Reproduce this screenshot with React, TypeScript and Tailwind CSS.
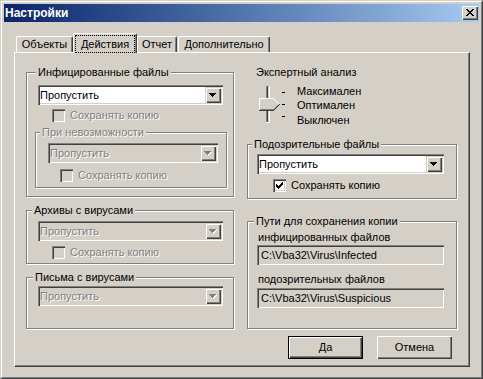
import type { ReactNode } from "react";

const sunken =
  "shadow-[inset_1px_1px_0_#808080,inset_2px_2px_0_#404040,inset_-1px_-1px_0_#fff,inset_-2px_-2px_0_#d4d0c8]";
const raised =
  "shadow-[inset_1px_1px_0_#d4d0c8,inset_2px_2px_0_#fff,inset_-1px_-1px_0_#404040,inset_-2px_-2px_0_#808080]";
const bevel = "shadow-[inset_1px_1px_0_#fff,inset_-1px_-1px_0_#404040,inset_-2px_-2px_0_#808080]";
const grayText = "text-[#808080] [text-shadow:1px_1px_0_#fff]";

function CloseGlyph() {
  const rows = [0, 1, 2, 3, 4, 5, 6];
  return (
    <svg width="8" height="7" viewBox="0 0 8 7" shapeRendering="crispEdges">
      {rows.map((i) => (
        <g key={i} fill="#000">
          <rect x={i} y={i} width="2" height="1" />
          <rect x={6 - i} y={i} width="2" height="1" />
        </g>
      ))}
    </svg>
  );
}

function Arrow({ disabled }: { disabled?: boolean }) {
  const tri = (c: string, d: number) => (
    <g fill={c}>
      <rect x={0 + d} y={0 + d} width="7" height="1" />
      <rect x={1 + d} y={1 + d} width="5" height="1" />
      <rect x={2 + d} y={2 + d} width="3" height="1" />
      <rect x={3 + d} y={3 + d} width="1" height="1" />
    </g>
  );
  return (
    <svg width="8" height="5" viewBox="0 0 8 5" shapeRendering="crispEdges">
      {disabled && tri("#fff", 1)}
      {tri(disabled ? "#808080" : "#000", 0)}
    </svg>
  );
}

function CheckMark() {
  const cols = [2, 3, 4, 3, 2, 1, 0];
  return (
    <svg width="7" height="7" viewBox="0 0 7 7" shapeRendering="crispEdges">
      {cols.map((y, x) => (
        <rect key={x} x={x} y={y} width="1" height="3" fill="#000" />
      ))}
    </svg>
  );
}

function Group({
  label,
  labelPos,
  dim,
  className,
  children,
}: {
  label: string;
  labelPos: string;
  dim?: boolean;
  className: string;
  children: ReactNode;
}) {
  return (
    <div className={`relative border border-[#808080] shadow-[inset_1px_1px_0_#fff,1px_1px_0_#fff] ${className}`}>
      <span
        className={`absolute -top-[7px] ${labelPos} whitespace-nowrap bg-[#d4d0c8] px-[2px] leading-[13px] ${dim ? grayText : ""}`}
      >
        {label}
      </span>
      {children}
    </div>
  );
}

function Combo({ className, disabled }: { className: string; disabled?: boolean }) {
  return (
    <div className={`flex h-[20px] p-[2px] ${sunken} ${disabled ? "bg-[#d4d0c8]" : "bg-white"} ${className}`}>
      <span className={`flex flex-1 items-center leading-[13px] ${disabled ? grayText : ""}`}>Пропустить</span>
      <span className={`flex w-[16px] items-center justify-center bg-[#d4d0c8] ${raised}`}>
        <Arrow disabled={disabled} />
      </span>
    </div>
  );
}

function Check({
  checked,
  disabled,
  className,
}: {
  checked?: boolean;
  disabled?: boolean;
  className: string;
}) {
  return (
    <div className={`flex items-center gap-[5px] ${className}`}>
      <span className={`flex h-[13px] w-[13px] p-[3px] ${sunken} ${disabled ? "bg-[#d4d0c8]" : "bg-white"}`}>
        {checked && <CheckMark />}
      </span>
      <span className={`leading-[13px] ${disabled ? grayText : ""}`}>Сохранять копию</span>
    </div>
  );
}

function Field({ value, className }: { value: string; className: string }) {
  return (
    <div className={`flex h-[20px] w-[187px] items-center bg-[#d4d0c8] pl-[4px] leading-[13px] ${sunken} ${className}`}>
      {value}
    </div>
  );
}

function Slider() {
  const up = [0, 1, 2, 3, 4];
  const down = [0, 1, 2, 3, 4, 5];
  return (
    <svg width="34" height="42" viewBox="0 0 34 42" shapeRendering="crispEdges">
      <rect x="11" y="2" width="4" height="37" fill="#fff" />
      <rect x="11" y="2" width="3" height="36" fill="#d4d0c8" />
      <rect x="11" y="2" width="1" height="36" fill="#808080" />
      <rect x="12" y="3" width="1" height="35" fill="#404040" />
      <rect x="11" y="2" width="3" height="1" fill="#808080" />
      <polygon points="4,14 18,14 24,20 18,26 4,26" fill="#d4d0c8" />
      <rect x="4" y="14" width="15" height="1" fill="#fff" />
      <rect x="4" y="14" width="1" height="12" fill="#fff" />
      {up.map((i) => (
        <rect key={`u${i}`} x={19 + i} y={15 + i} width="1" height="1" fill="#fff" />
      ))}
      <rect x="4" y="26" width="15" height="1" fill="#404040" />
      <rect x="5" y="25" width="14" height="1" fill="#808080" />
      {down.map((i) => (
        <rect key={`d${i}`} x={19 + i} y={25 - i} width="1" height="1" fill="#404040" />
      ))}
      {up.slice(0, 4).map((i) => (
        <rect key={`g${i}`} x={19 + i} y={24 - i} width="1" height="1" fill="#808080" />
      ))}
      <rect x="27" y="8" width="3" height="1" fill="#000" />
      <rect x="27" y="20" width="3" height="1" fill="#000" />
      <rect x="27" y="32" width="3" height="1" fill="#000" />
    </svg>
  );
}

export default function App() {
  return (
    <div className="h-[379px] w-[483px] border border-t-[#d4d0c8] border-l-[#d4d0c8] border-r-[#404040] border-b-[#404040] bg-[#d4d0c8] font-['Liberation_Sans',Arial,sans-serif] text-[11px] text-black">
      <div className="flex h-full flex-col border border-t-white border-l-white border-r-[#808080] border-b-[#808080] p-[2px]">
        {/* title bar */}
        <div className="flex h-[18px] items-center justify-between bg-linear-to-r from-[#0a246a] to-[#a6caf0] pl-[1px] pr-[1px]">
          <span className="text-[12px] font-bold leading-[14px] text-white">Настройки</span>
          <span className={`flex h-[14px] w-[16px] justify-center bg-[#d4d0c8] pt-[3px] ${bevel}`}>
            <CloseGlyph />
          </span>
        </div>

        {/* tabs */}
        <div className="mt-[11px] flex items-end pl-[12px]">
          <div className="flex h-[16px] w-[57px] items-center justify-center rounded-t-[2px] border-t border-l border-r border-white border-r-[#404040] shadow-[inset_-1px_0_0_#808080]">
            Объекты
          </div>
          <div className="relative z-10 -mb-[1px] flex h-[20px] w-[64px] rounded-t-[2px] border-t border-l border-r border-white border-r-[#404040] bg-[#d4d0c8] pt-[1px] pl-[1px] pr-[1px] shadow-[inset_-1px_0_0_#808080]">
            <span className="flex flex-1 items-center justify-center border border-dotted border-black">Действия</span>
          </div>
          <div className="flex h-[16px] w-[40px] items-center justify-center rounded-t-[2px] border-t border-l border-r border-white border-r-[#404040] shadow-[inset_-1px_0_0_#808080]">
            Отчет
          </div>
          <div className="ml-[1px] flex h-[16px] w-[92px] items-center justify-center rounded-t-[2px] border-t border-l border-r border-white border-r-[#404040] shadow-[inset_-1px_0_0_#808080]">
            Дополнительно
          </div>
        </div>

        {/* panel */}
        <div className="ml-[10px] flex h-[315px] w-[456px] items-start border border-white border-r-[#404040] border-b-[#404040] shadow-[inset_-1px_-1px_0_#808080]">
          {/* left column */}
          <div className="ml-[11px] mt-[19px] flex w-[208px] flex-col gap-[13px]">
            <Group label="Инфицированные файлы" labelPos="left-[9px]" className="h-[125px] pl-[11px] pt-[12px]">
              <Combo className="w-[185px]" />
              <Check disabled className="ml-[14px] mt-[4px]" />
              <Group
                label="При невозможности"
                labelPos="left-[4px]"
                dim
                className="-ml-[3px] mt-[10px] h-[56px] w-[192px] pl-[12px] pt-[10px]"
              >
                <Combo disabled className="w-[170px]" />
                <Check disabled className="ml-[12px] mt-[6px]" />
              </Group>
            </Group>

            <Group label="Архивы с вирусами" labelPos="left-[5px]" className="h-[54px] pl-[11px] pt-[10px]">
              <Combo disabled className="w-[185px]" />
              <Check disabled className="ml-[14px] mt-[5px]" />
            </Group>

            <Group label="Письма с вирусами" labelPos="left-[6px]" className="h-[52px] pl-[11px] pt-[8px]">
              <Combo disabled className="w-[185px]" />
            </Group>
          </div>

          {/* right column */}
          <div className="ml-[13px] mt-[13px] flex w-[210px] flex-col">
            <div className="pl-[9px] leading-[13px]">Экспертный анализ</div>
            <div className="mt-[5px] flex pl-[8px]">
              <Slider />
              <div className="ml-[8px] flex flex-col leading-[14px]">
                <span>Максимален</span>
                <span>Оптимален</span>
                <span className="mt-[1px]">Выключен</span>
              </div>
            </div>

            <Group label="Подозрительные файлы" labelPos="left-[4px]" className="mt-[17px] h-[55px] pl-[9px] pt-[9px]">
              <Combo className="w-[187px]" />
              <Check checked className="ml-[16px] mt-[5px]" />
            </Group>

            <Group label="Пути для сохранения копии" labelPos="left-[6px]" className="mt-[22px] h-[108px] pl-[9px] pt-[9px]">
              <div className="pl-[1px] leading-[13px]">инфицированных файлов</div>
              <Field className="mt-[1px]" value={"C:\\Vba32\\Virus\\Infected"} />
              <div className="mt-[8px] pl-[1px] leading-[13px]">подозрительных файлов</div>
              <Field className="mt-[2px]" value={"C:\\Vba32\\Virus\\Suspicious"} />
            </Group>

            <div className="ml-[41px] mt-[7px] flex gap-[14px]">
              <div className={`flex h-[23px] w-[75px] items-center justify-center border border-black ${bevel}`}>Да</div>
              <div className={`flex h-[23px] w-[75px] items-center justify-center ${bevel}`}>Отмена</div>
            </div>
          </div>
        </div>
      </div>
    </div>
  );
}
